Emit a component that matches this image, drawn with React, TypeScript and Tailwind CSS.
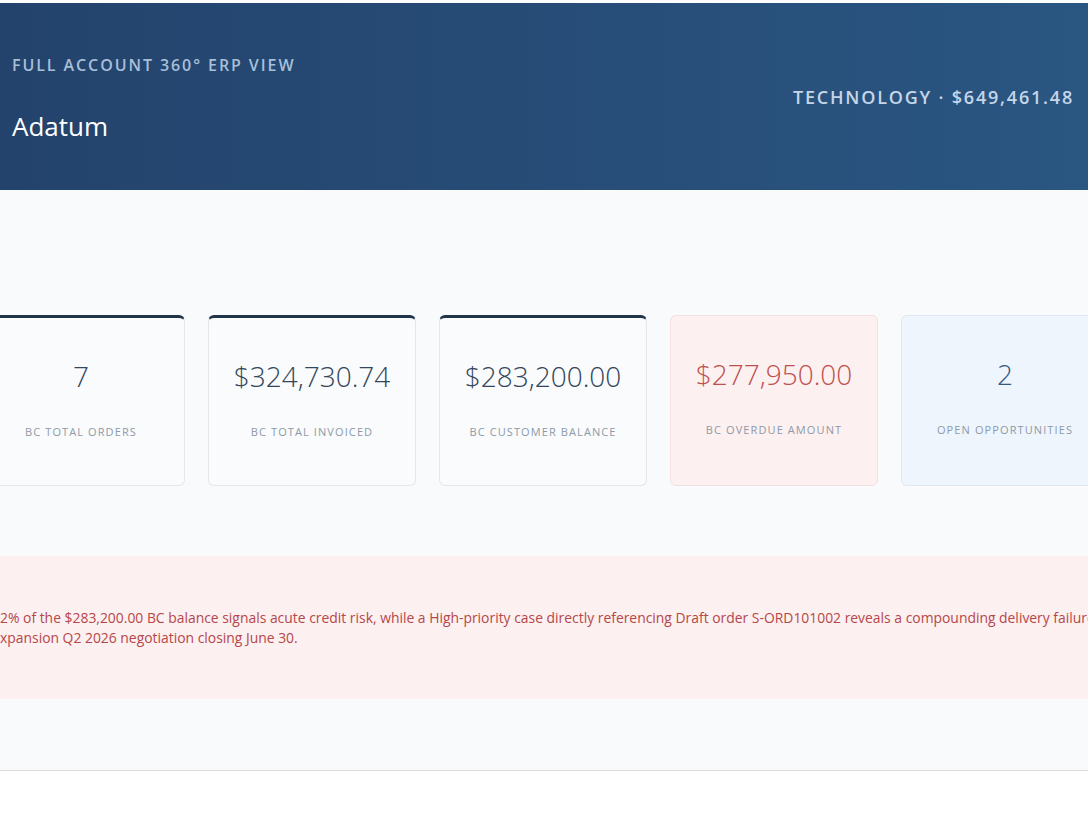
import React from "react";

type Stat = {
  value: string;
  label: string;
  tone: "default" | "danger" | "info";
};

const STATS: Stat[] = [
  { value: "7", label: "BC Total Orders", tone: "default" },
  { value: "$324,730.74", label: "BC Total Invoiced", tone: "default" },
  { value: "$283,200.00", label: "BC Customer Balance", tone: "default" },
  { value: "$277,950.00", label: "BC Overdue Amount", tone: "danger" },
  { value: "2", label: "Open Opportunities", tone: "info" },
];

const CARD_TONES = {
  default: "border-[#e3e8ee] border-t-[3px] border-t-[#22344a] bg-[#f9fbfd] text-[#344659]",
  danger: "border-[#f3e0e0] bg-[#fdf0f0] text-[#c0504f]",
  info: "border-[#dfe7f0] bg-[#eef5fd] text-[#375780]",
};

function StatCard({ stat }: { stat: Stat }) {
  return (
    <div
      className={`flex h-[171px] w-[208px] shrink-0 flex-col items-center rounded-md border ${CARD_TONES[stat.tone]}`}
    >
      <div className="mt-[38px] text-[28px] font-light leading-[40px]">
        {stat.value}
      </div>
      <div className="mt-[28px] text-[11px] uppercase tracking-[0.1em] text-[#8e99a7]">
        {stat.label}
      </div>
    </div>
  );
}

export default function App() {
  return (
    <div
      className="min-h-[816px] overflow-hidden bg-white pt-[3px]"
      style={{ fontFamily: '"Open Sans", "Noto Sans", sans-serif' }}
    >
      {/* Header band */}
      <header className="flex h-[187px] items-start justify-between bg-gradient-to-r from-[#23436c] to-[#2a5682] px-[12px]">
        <div className="pt-[50px]">
          <div className="text-[16px] font-semibold uppercase tracking-[0.12em] text-[#a8bfd9]">
            Full Account 360° ERP View
          </div>
          <h1 className="mt-[30px] text-[26px] leading-[38px] text-white">
            Adatum
          </h1>
        </div>
        <div className="pt-[81px] pr-[2px] text-[18px] font-semibold uppercase tracking-[0.1em] text-[#c6d6e9]">
          Technology · $649,461.48
        </div>
      </header>

      {/* Body */}
      <main className="border-b border-[#dcdcdc] bg-[#f8fafc]">
        <div className="-ml-[23px] flex gap-[23px] pt-[125px]">
          {STATS.map((s) => (
            <StatCard key={s.label} stat={s} />
          ))}
        </div>

        <div className="mt-[70px] h-[143px] overflow-hidden bg-[#fdf0f0] pt-[52px] text-[13.9px] leading-[20px] text-[#b5474a]">
          <div className="whitespace-nowrap">
            2% of the $283,200.00 BC balance signals acute credit risk, while a
            High-priority case directly referencing Draft order S-ORD101002
            reveals a compounding delivery failure that
          </div>
          <div className="whitespace-nowrap">
            xpansion Q2 2026 negotiation closing June 30.
          </div>
        </div>

        <div className="h-[71px]" />
      </main>
    </div>
  );
}
